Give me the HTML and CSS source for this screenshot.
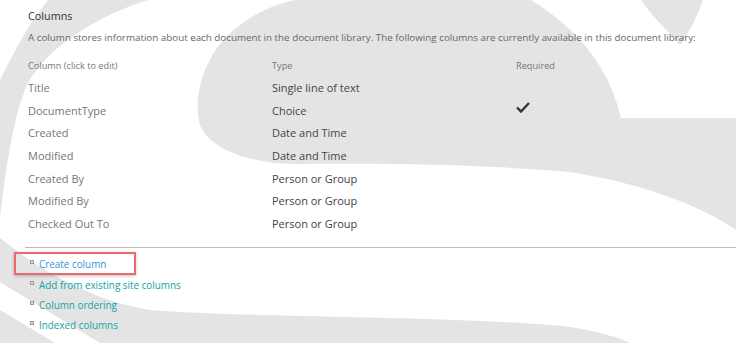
FILE: index.html
```html
<!DOCTYPE html>
<html lang="en">
<head>
<meta charset="utf-8">
<title>Columns</title>
<link rel="stylesheet" href="styles.css">
</head>
<body>
<div class="page">
  <svg class="watermark" viewBox="0 0 736 343" preserveAspectRatio="none" aria-hidden="true">
    <path d="M48 0 L148 0 C100 15 48 45 27 85 C14 115 6 165 0 220 L0 80 C15 50 30 22 48 0 Z"/>
    <path d="M295 0 L531 0 C580 30 610 70 621 118 L736 118 L736 230 C700 205 640 183 570 172 C500 166 420 163 300 164 C250 164 210 150 200 125 C192 95 205 50 240 25 C260 10 280 3 295 0 Z"/>
    <path d="M641 0 L703 0 C698 14 692 28 680 45 C665 28 650 14 641 0 Z"/>
    <path d="M0 238 C40 270 90 300 150 310 C250 318 470 316 570 327 C595 331 615 336 630 343 L0 343 Z"/>
    <path class="cut" d="M0 282 L100 343 L55 343 L0 310 Z"/>
  </svg>
  <div class="content">
    <h2 class="title">Columns</h2>
    <p class="desc">A column stores information about each document in the document library. The following columns are currently available in this document library:</p>
    <div class="cols">
      <div class="head">Column (click to edit)</div>
      <div class="head">Type</div>
      <div class="head">Required</div>

      <div class="name">Title</div>
      <div class="type">Single line of text</div>
      <div class="req"></div>

      <div class="name">DocumentType</div>
      <div class="type">Choice</div>
      <div class="req"><svg class="check" viewBox="0 0 14 11"><path d="M1 5.5 L5 9.5 L13 1" /></svg></div>

      <div class="name">Created</div>
      <div class="type">Date and Time</div>
      <div class="req"></div>

      <div class="name">Modified</div>
      <div class="type">Date and Time</div>
      <div class="req"></div>

      <div class="name">Created By</div>
      <div class="type">Person or Group</div>
      <div class="req"></div>

      <div class="name">Modified By</div>
      <div class="type">Person or Group</div>
      <div class="req"></div>

      <div class="name">Checked Out To</div>
      <div class="type">Person or Group</div>
      <div class="req"></div>
    </div>
    <hr class="sep">
    <ul class="links">
      <li class="highlight"><span class="bullet"></span><a class="blue" href="#">Create column</a></li>
      <li><span class="bullet"></span><a href="#">Add from existing site columns</a></li>
      <li><span class="bullet"></span><a href="#">Column ordering</a></li>
      <li><span class="bullet"></span><a href="#">Indexed columns</a></li>
    </ul>
  </div>
</div>
</body>
</html>
```
FILE: styles.css
```css
html, body {
  margin: 0;
  padding: 0;
  background: #ffffff;
}
body {
  font-family: "Open Sans", "Noto Sans", sans-serif;
  width: 736px;
  height: 343px;
  overflow: hidden;
}
.page {
  position: relative;
  width: 736px;
  height: 343px;
  overflow: hidden;
}
.watermark {
  position: absolute;
  left: 0;
  top: 0;
  width: 736px;
  height: 343px;
  fill: #e4e4e4;
  z-index: 0;
}
.watermark .cut {
  fill: #ffffff;
}
.content {
  position: relative;
  z-index: 1;
  padding-top: 6px;
}
.title {
  margin: 0 0 0 28px;
  font-size: 10.8px;
  font-weight: 400;
  line-height: 20px;
  color: #333;
}
.desc {
  margin: 2px 0 0 28px;
  font-size: 9.8px;
  line-height: 20px;
  color: #666;
  white-space: nowrap;
}
.cols {
  margin: 8px 0 0 28px;
  display: grid;
  grid-template-columns: 244px 244px 1fr;
  grid-auto-rows: 22.6px;
  grid-template-rows: 20px;
  align-items: center;
}
.head {
  font-size: 9.2px;
  color: #777;
  line-height: 20px;
}
.name {
  font-size: 11px;
  color: #777;
  padding-top: 1px;
}
.type {
  font-size: 11px;
  color: #444;
  padding-top: 1px;
}
.req {
  display: flex;
  align-items: center;
}
.check {
  width: 14px;
  height: 11px;
  margin-top: -4px;
  fill: none;
  stroke: #333;
  stroke-width: 2.4;
}
.sep {
  margin: 13px 0 0 25px;
  border: 0;
  border-top: 1px solid #bdbdbd;
  height: 0;
}
.links {
  list-style: none;
  margin: 6px 0 0 30px;
  padding: 0;
}
.links li {
  display: flex;
  align-items: flex-start;
  height: 20px;
  line-height: 20px;
  font-size: 9.9px;
}
.links li:first-child {
  margin-bottom: 1px;
}
.bullet {
  width: 2px;
  height: 2px;
  border: 1px solid #999;
  background: #ddd;
  margin: 6px 5px 0 0;
  flex: none;
}
.links a {
  color: #12a3a3;
  text-decoration: none;
}
.links a.blue {
  color: #3394d6;
}
.highlight {
  position: relative;
}
.highlight::after {
  content: "";
  position: absolute;
  left: -16px;
  top: -2px;
  width: 118px;
  height: 19px;
  border: 2px solid #ea6a6a;
  box-shadow: 0 1px 3px rgba(0,0,0,0.25);
}
```
